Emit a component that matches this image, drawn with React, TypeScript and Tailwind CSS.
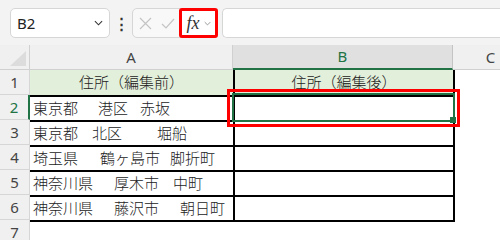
import React from "react";

const jp = "font-['Noto_Sans_CJK_JP','Noto_Sans',sans-serif]";

const rows: { a: string[]; gaps: number[] }[] = [
  { a: ["東京都", "港区", "赤坂"], gaps: [20, 12] },
  { a: ["東京都", "北区", "堀船"], gaps: [14, 35] },
  { a: ["埼玉県", "鶴ヶ島市", "脚折町"], gaps: [22, 10] },
  { a: ["神奈川県", "厚木市", "中町"], gaps: [21, 14] },
  { a: ["神奈川県", "藤沢市", "朝日町"], gaps: [21, 21] },
];

function Chevron({ className }: { className?: string }) {
  return (
    <svg className={className} viewBox="0 0 10 6" fill="none" stroke="currentColor" strokeWidth={1.2}>
      <path d="M1 1l4 4 4-4" />
    </svg>
  );
}

export default function App() {
  return (
    <div className={`w-[500px] h-[240px] overflow-hidden bg-white font-light ${jp}`}>
      {/* Top bar */}
      <div className="h-[45px] bg-[#f3f3f3] flex items-start pt-[8px] pl-[10px]">
        <div className="w-[100px] h-[30px] bg-white border border-[#d6d6d6] rounded-[5px] flex items-center justify-between pl-[6px] pr-[6px]">
          <span className="text-[15px] text-[#222] font-normal font-['Noto_Sans',sans-serif]">B2</span>
          <Chevron className="w-[9px] h-[6px] text-[#333]" />
        </div>
        <div className="w-[22px] h-[30px] flex items-center justify-center text-[#333] text-[15px] font-bold">⋮</div>
        <div className="h-[30px] flex items-stretch bg-[#f8f8f8] border border-[#d6d6d6] rounded-[5px]">
          <div className="w-[24px] flex items-center justify-center">
            <svg className="w-[13px] h-[13px]" viewBox="0 0 13 13" stroke="#c4c4c4" strokeWidth={1.2}>
              <path d="M1 1l11 11M12 1L1 12" />
            </svg>
          </div>
          <div className="w-[22px] flex items-center justify-center">
            <svg className="w-[14px] h-[11px]" viewBox="0 0 14 11" fill="none" stroke="#c4c4c4" strokeWidth={1.2}>
              <path d="M1 6l4 4 8-9" />
            </svg>
          </div>
          <div className="w-[39px] -my-[1px] -mr-[1px] border-[3px] border-[#ff0000] rounded-[3px] bg-white flex items-center justify-center gap-[4px]">
            <span className="font-['Liberation_Serif',serif] italic font-normal text-[18px] leading-none text-[#333]">fx</span>
            <Chevron className="w-[7px] h-[5px] text-[#888]" />
          </div>
        </div>
        <div className="ml-[4px] flex-1 h-[30px] bg-white border border-[#d6d6d6] border-r-0 rounded-l-[5px]" />
      </div>

      {/* Sheet */}
      <div className="relative">
        {/* Column headers */}
        <div className="flex h-[25px] bg-[#f0f0f0] border-b border-[#d0d0d0] text-[15px] font-normal font-['Noto_Sans',sans-serif]">
          <div className="w-[30px] border-r border-[#d0d0d0] flex items-end justify-end pr-[3px] pb-[3px]">
            <svg className="w-[16px] h-[15px]" viewBox="0 0 16 15">
              <path d="M16 0V15H0Z" fill="#dcdcdc" />
            </svg>
          </div>
          <div className="w-[203px] border-r border-[#d0d0d0] flex items-center justify-center text-[#444]">A</div>
          <div className="w-[220px] bg-[#e0e0e0] border-r border-[#c4c4c4] border-b-2 border-b-[#217346] -mb-[1px] flex items-center justify-center text-[#217346]">
            B
          </div>
          <div className="flex-1 flex items-center justify-center pl-[28px] text-[#444]">C</div>
        </div>

        {/* Row 1 */}
        <div className="flex h-[25px]">
          <div className="w-[30px] bg-[#f0f0f0] border-r border-b border-[#d6d6d6] flex items-center justify-center text-[15px] text-[#444] font-normal font-['Noto_Sans',sans-serif]">1</div>
          <div className="w-[205px] bg-[#e2efda] border-r-2 border-black flex items-center justify-center text-[15px] text-[#222]">住所（編集前）</div>
          <div className="w-[220px] bg-[#e2efda] border-r-2 border-black flex items-center justify-center text-[15px] text-[#222]">住所（編集後）</div>
        </div>

        {rows.map((r, i) => (
          <div key={i} className="flex h-[25px]">
            <div
              className={`w-[30px] bg-[#f0f0f0] border-b border-[#d6d6d6] flex items-center justify-center text-[15px] font-normal font-['Noto_Sans',sans-serif] ${
                i === 0 ? "border-r-2 border-r-[#217346] text-[#217346]" : "border-r border-r-[#d6d6d6] text-[#444]"
              }`}
            >
              {i + 2}
            </div>
            <div className="w-[205px] border-t-2 border-r-2 border-black flex items-center pl-[3px] text-[15px] text-[#222] whitespace-nowrap">
              {r.a.map((s, j) => (
                <span key={j} style={j > 0 ? { marginLeft: r.gaps[j - 1] } : undefined}>
                  {s}
                </span>
              ))}
            </div>
            <div className="w-[220px] border-t-2 border-r-2 border-black" />
          </div>
        ))}

        {/* Row 7 */}
        <div className="flex h-[25px]">
          <div className="w-[30px] bg-[#f0f0f0] border-r border-[#d6d6d6] flex items-center justify-center text-[15px] text-[#444] font-normal font-['Noto_Sans',sans-serif]">7</div>
          <div className="w-[205px] border-t-2 border-black" />
          <div className="w-[220px] border-t-2 border-black" />
        </div>

        {/* Selection B2 */}
        <div className="absolute left-[232px] top-[48px] w-[223px] h-[29px] border-2 border-[#217346]">
          <div className="absolute -right-[3px] -bottom-[3px] w-[6px] h-[6px] bg-[#217346]" />
        </div>
        {/* Highlight */}
        <div className="absolute left-[227px] top-[44px] w-[233px] h-[38px] border-[3px] border-[#ff0000]" />
      </div>
    </div>
  );
}
